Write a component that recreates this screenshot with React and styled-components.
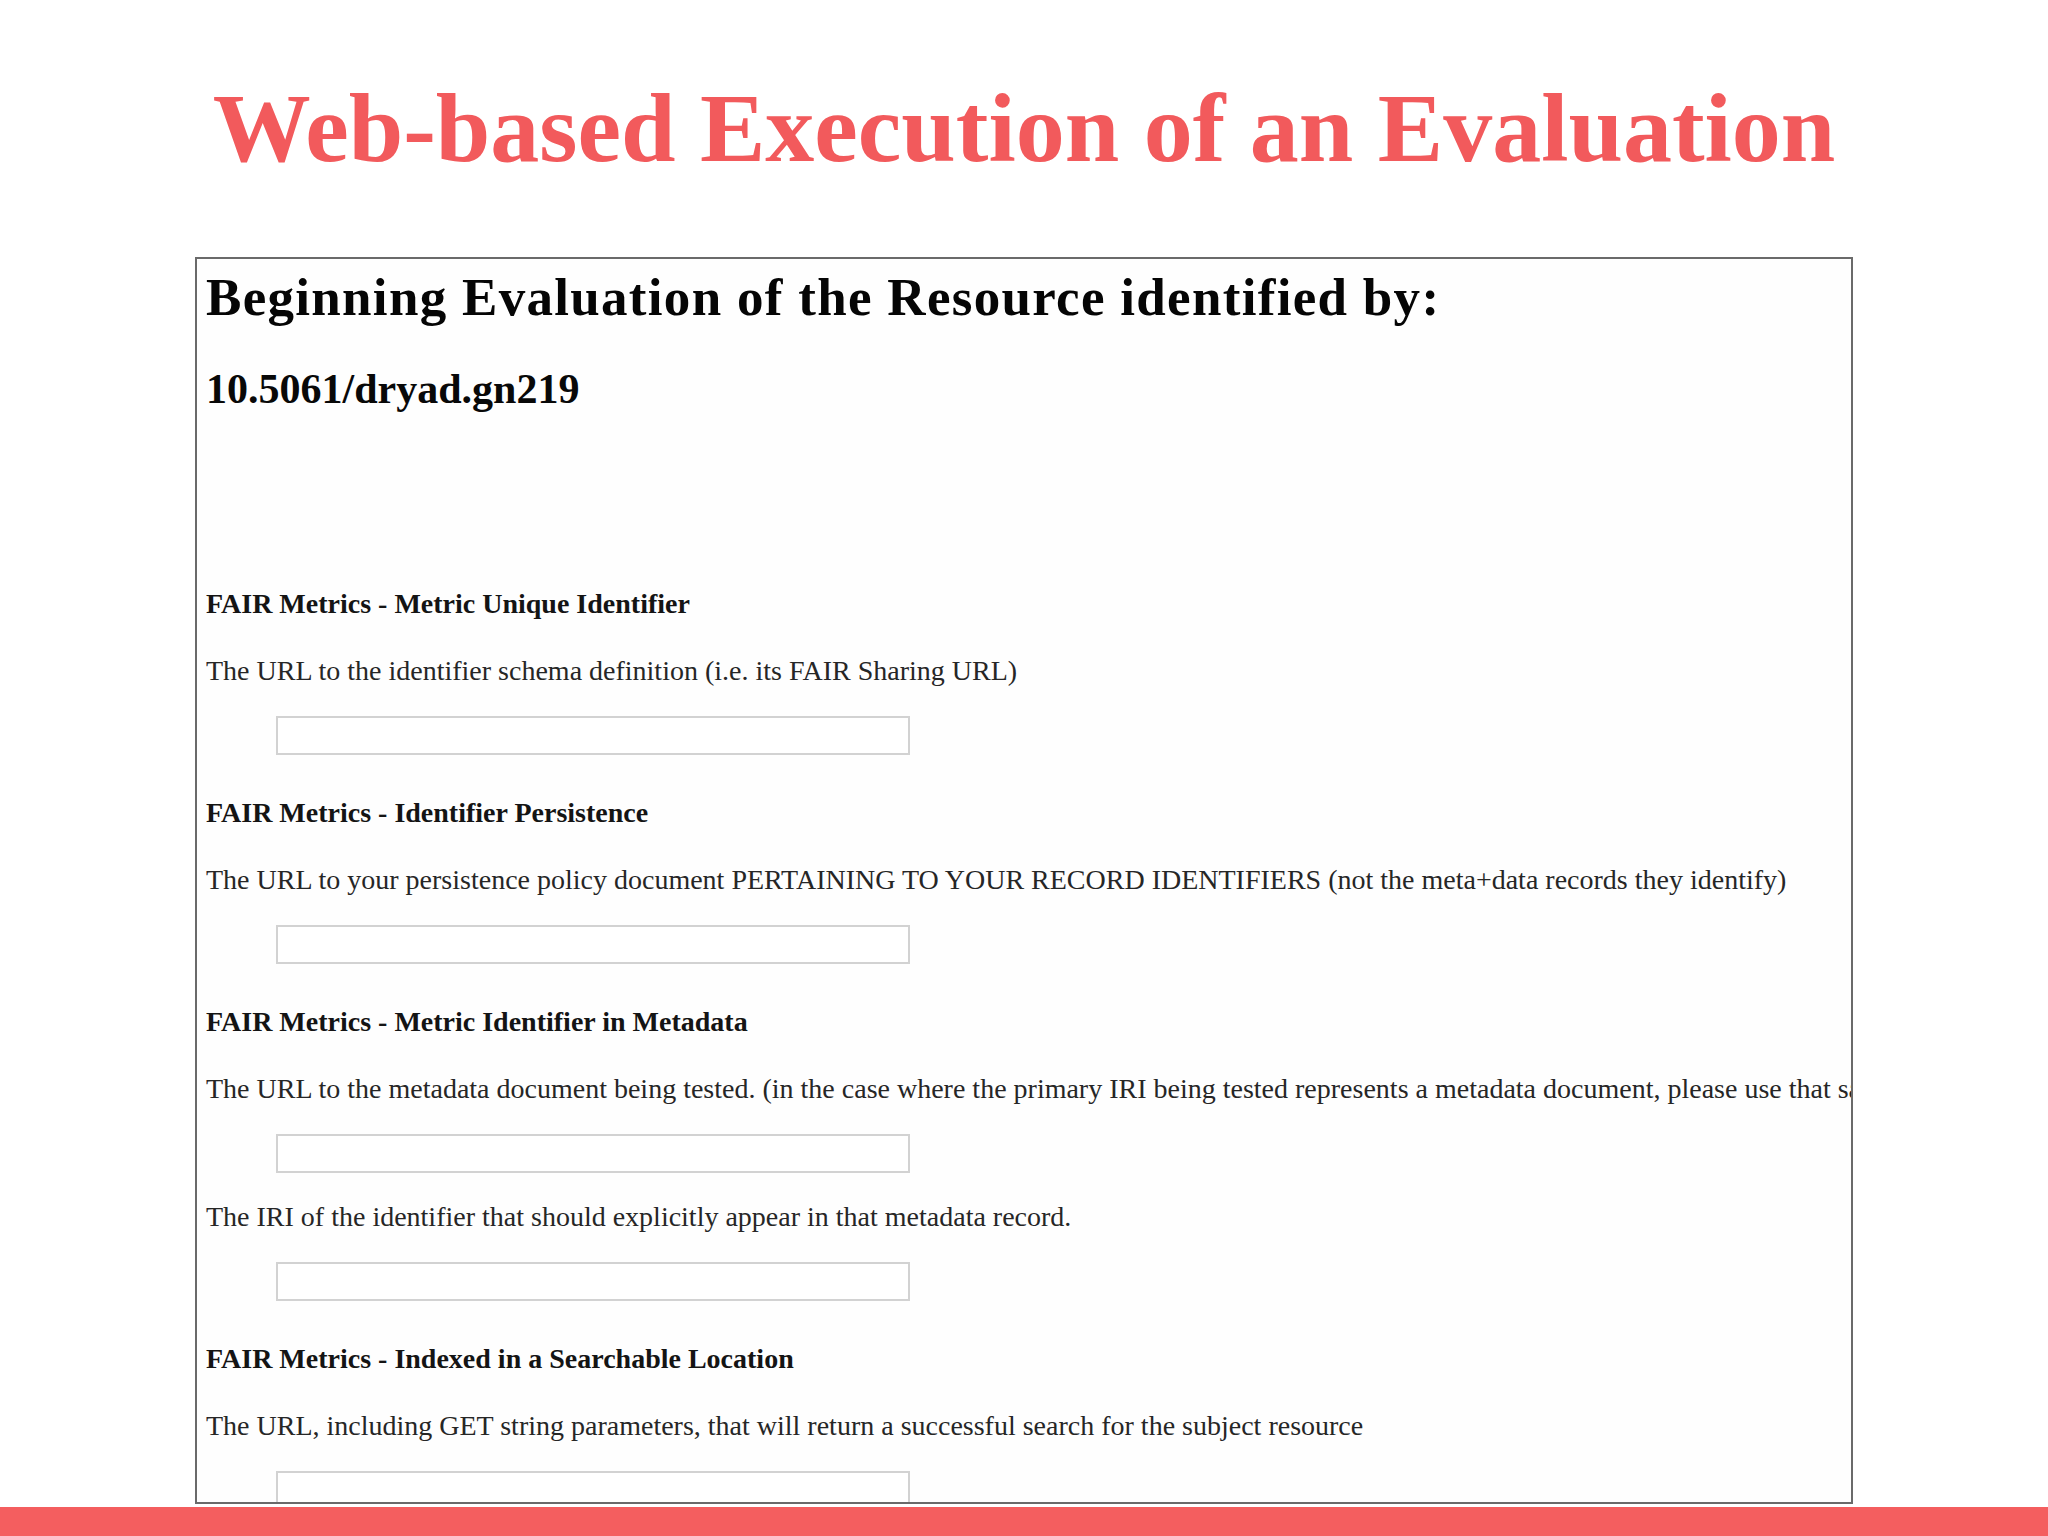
import React from "react";
import styled, { createGlobalStyle } from "styled-components";

const GlobalStyle = createGlobalStyle`
  html, body {
    margin: 0;
    padding: 0;
    background: #ffffff;
  }
  body {
    font-family: "Liberation Serif", "Times New Roman", serif;
  }
`;

const Page = styled.div`
  width: 2048px;
  height: 1536px;
  display: flex;
  flex-direction: column;
  overflow: hidden;
  background: #ffffff;
`;

const SlideTitle = styled.h1`
  margin: 79px 0 0 0;
  height: 98px;
  font-family: "Liberation Serif", "Times New Roman", serif;
  font-weight: 700;
  font-size: 98px;
  line-height: 98px;
  color: #f25a5c;
  text-align: center;
  white-space: nowrap;
`;

const Frame = styled.section`
  margin: 80px 0 0 195px;
  width: 1658px;
  height: 1247px;
  box-sizing: border-box;
  border: 2px solid #6a6a6a;
  background: #fefefe;
  padding: 7px 0 0 9px;
  overflow: hidden;
  display: flex;
  flex-direction: column;
  flex: none;
`;

const Heading = styled.h2`
  margin: 0;
  font-family: "Liberation Serif", "Times New Roman", serif;
  font-weight: 700;
  font-size: 53px;
  line-height: 62px;
  letter-spacing: 1.3px;
  color: #050505;
  white-space: nowrap;
`;

const Identifier = styled.h3`
  margin: 37px 0 0 0;
  font-family: "Liberation Serif", "Times New Roman", serif;
  font-weight: 700;
  font-size: 42px;
  line-height: 48px;
  color: #080808;
  white-space: nowrap;
`;

const Sections = styled.div`
  margin-top: 175px;
  display: flex;
  flex-direction: column;
`;

const Section = styled.div`
  display: flex;
  flex-direction: column;
  margin-bottom: 42px;
`;

const MetricTitle = styled.h4`
  margin: 0 0 35px 0;
  font-family: "Liberation Serif", "Times New Roman", serif;
  font-weight: 700;
  font-size: 28px;
  line-height: 32px;
  color: #141414;
  white-space: nowrap;
`;

const Fields = styled.div`
  display: flex;
  flex-direction: column;
  gap: 28px;
`;

const Field = styled.label`
  display: flex;
  flex-direction: column;
`;

const FieldText = styled.p`
  margin: 0 0 29px 0;
  font-family: "Liberation Serif", "Times New Roman", serif;
  font-weight: 400;
  font-size: 28px;
  line-height: 32px;
  color: #262626;
  white-space: nowrap;
`;

const TextInput = styled.input`
  margin-left: 70px;
  width: 634px;
  height: 39px;
  box-sizing: border-box;
  border: 2px solid #d2d2d2;
  background: #ffffff;
  padding: 0 6px;
  font-family: "Liberation Serif", serif;
  font-size: 24px;
  outline: none;
`;

const BottomBar = styled.div`
  margin-top: auto;
  height: 29px;
  background: #f45e5f;
  flex: none;
`;

const metrics = [
  {
    title: "FAIR Metrics - Metric Unique Identifier",
    fields: [
      "The URL to the identifier schema definition (i.e. its FAIR Sharing URL)",
    ],
  },
  {
    title: "FAIR Metrics - Identifier Persistence",
    fields: [
      "The URL to your persistence policy document PERTAINING TO YOUR RECORD IDENTIFIERS (not the meta+data records they identify)",
    ],
  },
  {
    title: "FAIR Metrics - Metric Identifier in Metadata",
    fields: [
      "The URL to the metadata document being tested. (in the case where the primary IRI being tested represents a metadata document, please use that same IRI here)",
      "The IRI of the identifier that should explicitly appear in that metadata record.",
    ],
  },
  {
    title: "FAIR Metrics - Indexed in a Searchable Location",
    fields: [
      "The URL, including GET string parameters, that will return a successful search for the subject resource",
    ],
  },
];

export default function App() {
  return (
    <>
      <GlobalStyle />
      <Page>
        <SlideTitle>Web-based Execution of an Evaluation</SlideTitle>
        <Frame>
          <Heading>Beginning Evaluation of the Resource identified by:</Heading>
          <Identifier>10.5061/dryad.gn219</Identifier>
          <Sections>
            {metrics.map((m) => (
              <Section key={m.title}>
                <MetricTitle>{m.title}</MetricTitle>
                <Fields>
                  {m.fields.map((f) => (
                    <Field key={f}>
                      <FieldText>{f}</FieldText>
                      <TextInput type="text" />
                    </Field>
                  ))}
                </Fields>
              </Section>
            ))}
          </Sections>
        </Frame>
        <BottomBar />
      </Page>
    </>
  );
}
